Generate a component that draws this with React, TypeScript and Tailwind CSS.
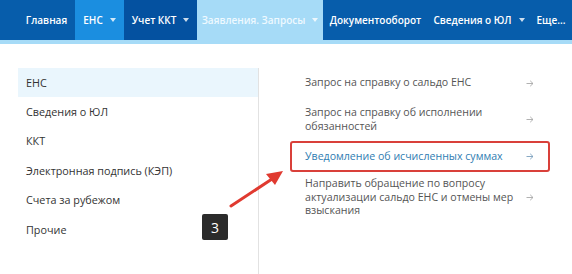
const navItems = [
  { label: "Главная", w: "w-[57px]", bg: "", caret: false },
  { label: "ЕНС", w: "w-[49px]", bg: "bg-[#1b8ee0]", caret: true },
  { label: "Учет ККТ", w: "w-[73px]", bg: "bg-[#0451a0]", caret: true },
  { label: "Заявления. Запросы", w: "w-[126px]", bg: "bg-[#a6dbf7] h-[44px] pb-[4px]", caret: true },
  { label: "Документооборот", w: "w-[105px]", bg: "", caret: false },
  { label: "Сведения о ЮЛ", w: "w-[102px]", bg: "", caret: true },
  { label: "Еще...", w: "w-[42px]", bg: "", caret: false },
];

const sideItems = ["ЕНС", "Сведения о ЮЛ", "ККТ", "Электронная подпись (КЭП)", "Счета за рубежом", "Прочие"];

function Caret() {
  return (
    <svg width="6" height="4" viewBox="0 0 6 4" className="ml-[7px] shrink-0 opacity-80">
      <path d="M0 0h6L3 4z" fill="currentColor" />
    </svg>
  );
}

function Arrow({ color = "#a8a8a8" }: { color?: string }) {
  return (
    <svg width="8" height="7" viewBox="0 0 8 7" className="shrink-0">
      <path d="M0.5 3.5h6.5M4.2 0.8l2.8 2.7-2.8 2.7" fill="none" stroke={color} strokeWidth="0.9" />
    </svg>
  );
}

export default function App() {
  return (
    <div
      className="relative w-[572px] h-[274px] overflow-hidden bg-white"
      style={{ fontFamily: '"Open Sans", "Noto Sans", sans-serif' }}
    >
      <div className="relative">
        <div className="flex h-[40px] bg-[#075dab] pl-[18px] text-[10px] font-semibold text-white">
          {navItems.map((it) => (
            <div key={it.label} className={`flex shrink-0 items-center justify-center whitespace-nowrap ${it.w} ${it.bg}`}>
              <span className={it.label === "Заявления. Запросы" ? "text-[#eef9ff]" : ""}>{it.label}</span>
              {it.caret && <Caret />}
            </div>
          ))}
        </div>
        <div className="h-[4px] bg-[#a6dbf7]" />
      </div>

      <div className="flex pt-[24px] pl-[18px]">
        <div className="w-[240px] shrink-0">
          {sideItems.map((s, i) => (
            <div
              key={s}
              className={`flex h-[29.4px] items-center pl-[8px] text-[10.8px] text-[#333] ${i === 0 ? "bg-[#eaf6fd]" : ""}`}
            >
              {s}
            </div>
          ))}
        </div>
        <div className="h-[230px] w-px bg-[#e2e2e2]" />
        <div className="ml-[31px] flex w-[260px] flex-col text-[10.6px] leading-[13.5px] text-[#555]">
          <div className="flex h-[30px] items-center justify-between pl-[15px] pr-[16px]">
            <span>Запрос на справку о сальдо ЕНС</span>
            <Arrow />
          </div>
          <div className="flex h-[43px] items-center justify-between pl-[15px] pr-[16px]">
            <span>
              Запрос на справку об исполнении
              <br />
              обязанностей
            </span>
            <Arrow />
          </div>
          <div className="flex h-[31px] items-center justify-between rounded-[3px] border-2 border-[#d9403a] pl-[13px] pr-[14px] text-[#2f7db2]">
            <span className="whitespace-nowrap">Уведомление об исчисленных суммах</span>
            <Arrow color="#7a9fbd" />
          </div>
          <div className="flex h-[51px] items-center justify-between pl-[15px] pr-[16px]">
            <span className="whitespace-nowrap">
              Направить обращение по вопросу
              <br />
              актуализации сальдо ЕНС и отмены мер
              <br />
              взыскания
            </span>
            <Arrow />
          </div>
        </div>
      </div>

      {/* annotation */}
      <svg className="absolute left-0 top-0" width="572" height="274" viewBox="0 0 572 274">
        <path d="M231 206 L272 179" stroke="#e03a30" strokeWidth="3" strokeLinecap="round" />
        <path d="M283 171 L266 174 L275 185 Z" fill="#e03a30" />
      </svg>
      <div className="absolute left-[202px] top-[214px] flex h-[26px] w-[26px] items-center justify-center rounded-[2px] bg-[#2b2b2b] text-[14px] text-white">
        3
      </div>
    </div>
  );
}
